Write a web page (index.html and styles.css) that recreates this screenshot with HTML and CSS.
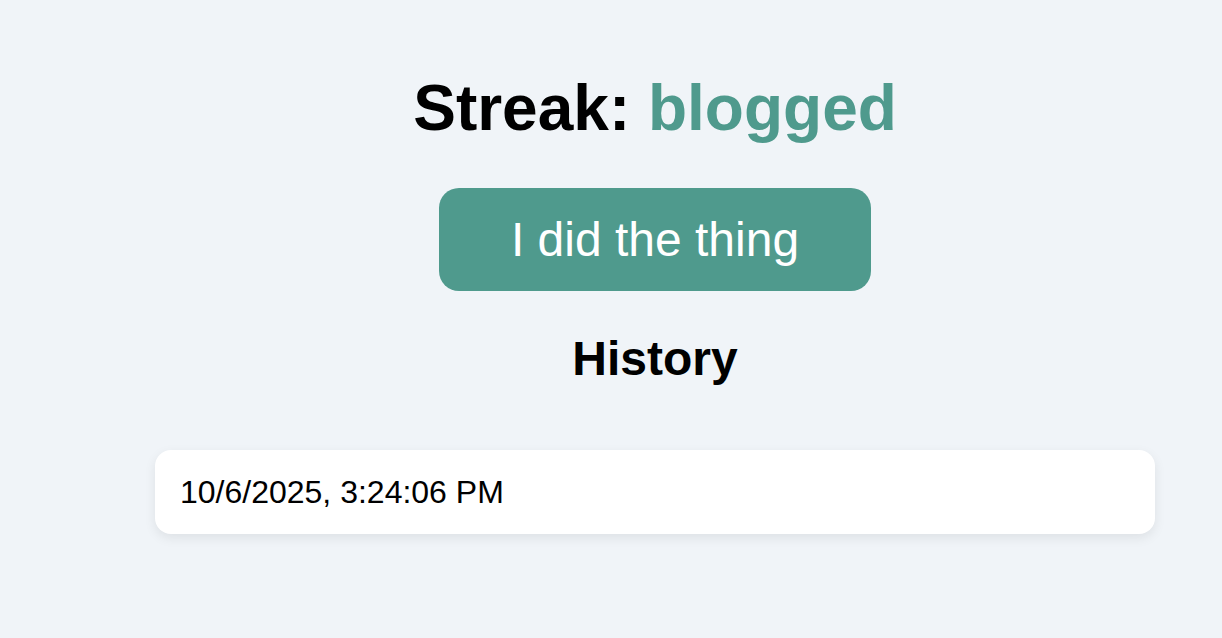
FILE: index.html
```html
<!DOCTYPE html>
<html lang="en">
<head>
<meta charset="utf-8">
<title>Streak</title>
<link rel="stylesheet" href="styles.css">
</head>
<body>
<main class="app">
  <h1 class="title">Streak: <span class="streak-name">blogged</span></h1>
  <button class="did-btn" type="button">I did the thing</button>
  <h2 class="history-title">History</h2>
  <ul class="history">
    <li class="history-item">10/6/2025, 3:24:06 PM</li>
  </ul>
</main>
</body>
</html>
```

FILE: styles.css
```css
html, body {
  margin: 0;
  padding: 0;
}

body {
  background: #f0f4f8;
  font-family: "Liberation Sans", Arial, Helvetica, sans-serif;
  color: #000;
}

.app {
  display: flex;
  flex-direction: column;
  align-items: center;
  padding: 71px 0 40px 88px;
}

.title {
  margin: 0;
  font-size: 64px;
  line-height: 74px;
  font-weight: 700;
}

.streak-name {
  color: #4f9a8d;
}

.did-btn {
  margin-top: 43px;
  border: none;
  background: #4f9a8d;
  color: #fff;
  font-family: inherit;
  font-size: 48px;
  line-height: 55px;
  padding: 24px 72px;
  border-radius: 20px;
  cursor: pointer;
}

.history-title {
  margin: 40px 0 0;
  font-size: 48px;
  line-height: 55px;
  font-weight: 700;
}

.history {
  list-style: none;
  margin: 64px 0 0;
  padding: 0;
  width: 1000px;
}

.history-item {
  background: #fff;
  border-radius: 16px;
  padding: 24px 25px;
  font-size: 32px;
  line-height: 36px;
  box-shadow: 0 4px 12px rgba(0, 0, 0, 0.08);
}
```
